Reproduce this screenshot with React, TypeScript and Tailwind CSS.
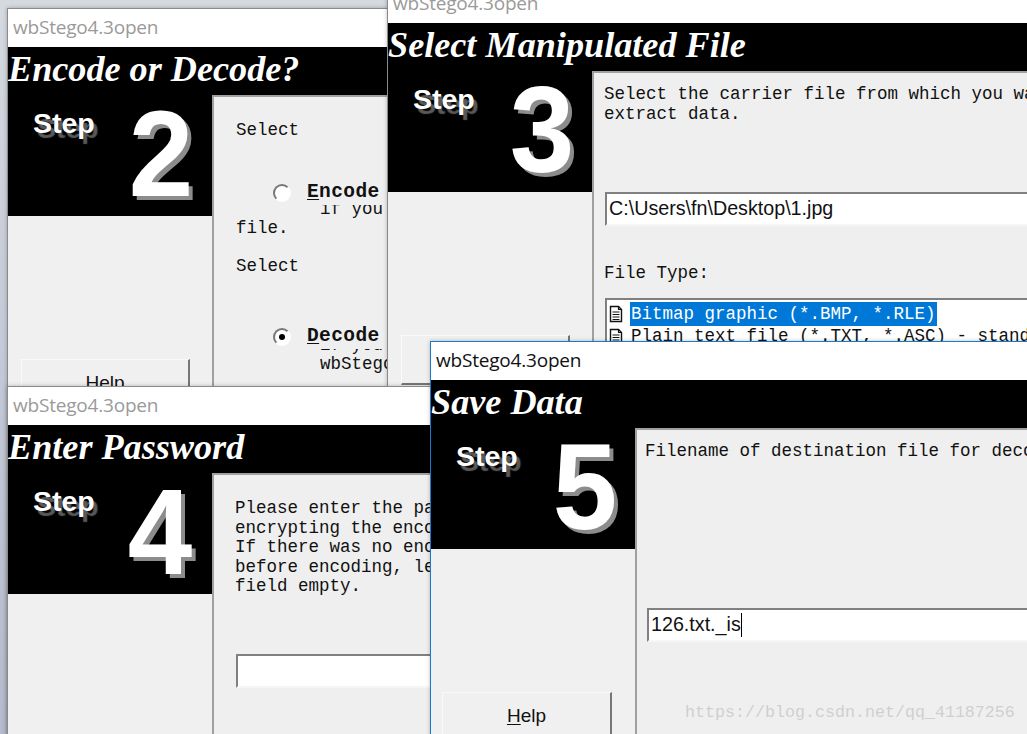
import React from "react";

const mono = "font-['Liberation_Mono',monospace] text-[17.5px] leading-[19.5px] text-[#111]";

function Radio({ checked }: { checked?: boolean }) {
  return (
    <span className="w-[18px] h-[18px] rounded-full bg-white border-2 border-t-[#777] border-l-[#777] border-r-white border-b-white flex items-center justify-center shrink-0">
      {checked && <span className="w-[6px] h-[6px] rounded-full bg-black" />}
    </span>
  );
}

function DocIcon() {
  return (
    <svg width="16" height="18" viewBox="0 0 16 18" className="shrink-0">
      <path d="M2.5 1.5h8l3 3v12h-11z" fill="#fff" stroke="#111" strokeWidth="1.4" />
      <path d="M10.5 1.5v3h3M4.5 7h7M4.5 9.5h7M4.5 12h7M4.5 14.5h7" fill="none" stroke="#111" strokeWidth="1.2" />
    </svg>
  );
}

function HelpButton({ label, w, mt }: { label: boolean; w: string; mt: string }) {
  return (
    <div className={`${w} ${mt} h-[50px] shrink-0 border border-t-[#fafafa] border-l-[#fafafa] border-r-2 border-b-2 border-r-[#777] border-b-[#777] flex justify-center pt-[11px] font-['Liberation_Sans',sans-serif] text-[19px] leading-[24px] text-[#111]`}>
      {label && (
        <span>
          <span className="underline underline-offset-2">H</span>elp
        </span>
      )}
    </div>
  );
}

function Field({ text, caret, w }: { text?: string; caret?: boolean; w: string }) {
  return (
    <div className={`${w} h-[34px] bg-white border-2 border-t-[#808080] border-l-[#808080] border-r-[#f6f6f6] border-b-[#f6f6f6] flex items-center pl-[2px] font-['Liberation_Sans',sans-serif] text-[19.7px] text-[#111] whitespace-nowrap`}>
      {text}
      {caret && <span className="inline-block w-px h-[24px] bg-black" />}
    </div>
  );
}

function Win({
  pos, z, title, heading, num, active, numCls, children, side,
}: {
  pos: string; z: string; title: string; heading: string; num: string; active?: boolean;
  numCls: string; children: React.ReactNode; side: React.ReactNode;
}) {
  return (
    <div className={`absolute ${pos} ${z} h-[900px] bg-[#f0f0f0] flex flex-col overflow-hidden border-l ${active ? "border-l-[#1979ca] border-t border-t-[#1979ca]" : "border-l-[#8a8a8a] border-t border-t-[#8a8a8a]"} shadow-[0_0_4px_rgba(0,0,0,0.25)]`}>
      <div className={`h-[38px] bg-white shrink-0 flex items-center pl-[5px] pb-[2px] font-['Open_Sans',sans-serif] text-[19px] whitespace-nowrap tracking-[-0.2px] ${active ? "text-[#111]" : "text-[#9a9a9a]"}`}>
        {title}
      </div>
      <div className="h-[48px] bg-black shrink-0 flex items-center pb-[4px] font-['Liberation_Serif',serif] font-bold italic text-[36.2px] text-white whitespace-nowrap">
        {heading}
      </div>
      <div className="flex flex-1 min-h-0">
        <div className="w-[204px] shrink-0 flex flex-col items-start">
          <div className="w-full h-[121px] bg-black flex font-['Liberation_Sans',sans-serif] font-bold text-white overflow-hidden">
            <span className="ml-[25px] mt-[11px] h-[34px] text-[28.5px] leading-[34px] [text-shadow:4px_5px_1px_#5a5a5a]">Step</span>
            <span className={`${numCls} -mt-[4px] h-[121px] text-[116px] leading-[121px] origin-top scale-y-[1.05] [text-shadow:4px_4px_0_#8c8c8c]`}>{num}</span>
          </div>
          {side}
        </div>
        <div className="flex-1 border-l-2 border-t-2 border-l-[#a0a0a0] border-t-[#a0a0a0] bg-[#efefef] flex flex-col items-start whitespace-pre">
          {children}
        </div>
      </div>
    </div>
  );
}

export default function App() {
  return (
    <div className="relative w-[1027px] h-[734px] overflow-hidden bg-gradient-to-b from-[#d5d9e0] via-[#c3c9d6] to-[#b4bbcc]">
      <Win pos="left-[7px] top-[8px] w-[385px]" z="z-10" title="wbStego4.3open" heading="Encode or Decode?" num="2" numCls="ml-[34px]"
        side={<div className="pl-[13px]"><HelpButton label w="w-[169px]" mt="mt-[143px]" /></div>}>
        <div className={`${mono} pl-[22px] pt-[24px]`}>
          <div>Select</div>
          <div className="flex items-center mt-[40px] pl-[37px] h-[24px] relative z-10 bg-[#efefef]">
            <Radio />
            <span className="ml-[16px] font-bold text-[19.5px] tracking-[0.4px]"><span className="underline underline-offset-2">E</span>ncode</span>
          </div>
          <div className="pl-[84px] -mt-[5px] h-[13px]">if you</div>
          <div className="mt-[6px]">file.</div>
          <div className="mt-[19px]">Select</div>
          <div className="flex items-center mt-[48px] pl-[37px] h-[24px] relative z-10 bg-[#efefef]">
            <Radio checked />
            <span className="ml-[16px] font-bold text-[19.5px] tracking-[0.4px]"><span className="underline underline-offset-2">D</span>ecode</span>
          </div>
          <div className="pl-[84px] -mt-[13px] h-[19px]">if you</div>
          <div className="pl-[84px]">wbStego</div>
        </div>
      </Win>

      <Win pos="left-[387px] -top-[16px] w-[700px]" z="z-20" title="wbStego4.3open" heading="Select Manipulated File" num="3" numCls="ml-[35px]"
        side={<div className="pl-[13px]"><HelpButton label={false} w="w-[169px]" mt="mt-[143px]" /></div>}>
        <div className={`${mono} pl-[10px] pt-[12px] w-full`}>
          <div>Select the carrier file from which you want to{"\n"}extract data.</div>
          <div className="mt-[68px] pl-[1px]"><Field text="C:\Users\fn\Desktop\1.jpg" w="w-[500px]" /></div>
          <div className="mt-[38px]">File Type:</div>
          <div className="mt-[14px] ml-[1px] w-[500px] h-[60px] bg-white border-2 border-t-[#808080] border-l-[#808080] border-r-0 border-b-0 pl-[1px]">
            <div className="flex items-center h-[22px] mt-[3px]">
              <DocIcon />
              <span className="ml-[6px] bg-[#0078d7] text-white h-[24px] leading-[24px] px-[1px]">Bitmap graphic (*.BMP, *.RLE)</span>
            </div>
            <div className="flex items-center h-[22px] mt-[1px]">
              <DocIcon />
              <span className="ml-[6px] px-[1px]">Plain text file (*.TXT, *.ASC) - standard</span>
            </div>
          </div>
        </div>
      </Win>

      <Win pos="left-[7px] top-[386px] w-[440px]" z="z-30" title="wbStego4.3open" heading="Enter Password" num="4" numCls="ml-[33px]" side={null}>
        <div className={`${mono} pl-[21px] pt-[24px]`}>
          <div>Please enter the password used for{"\n"}encrypting the encoded data.{"\n"}If there was no encryption used{"\n"}before encoding, leave this{"\n"}field empty.</div>
          <div className="mt-[57px] pl-[1px]"><Field w="w-[300px]" /></div>
        </div>
      </Win>

      <Win active pos="left-[430px] top-[341px] w-[640px]" z="z-40" title="wbStego4.3open" heading="Save Data" num="5" numCls="ml-[35px]"
        side={<div className="pl-[11px]"><HelpButton label w="w-[170px]" mt="mt-[143px]" /></div>}>
        <div className={`${mono} pl-[8px] pt-[12px] w-full`}>
          <div>Filename of destination file for decoded data</div>
          <div className="mt-[146px] pl-[2px]"><Field text="126.txt._is" caret w="w-[500px]" /></div>
        </div>
      </Win>

      <div className="absolute z-50 left-[685px] top-[702px] font-['Liberation_Mono',monospace] text-[16.67px] leading-[22px] text-[#cfcfcf] whitespace-nowrap">
        https://blog.csdn.net/qq_41187256
      </div>
    </div>
  );
}
